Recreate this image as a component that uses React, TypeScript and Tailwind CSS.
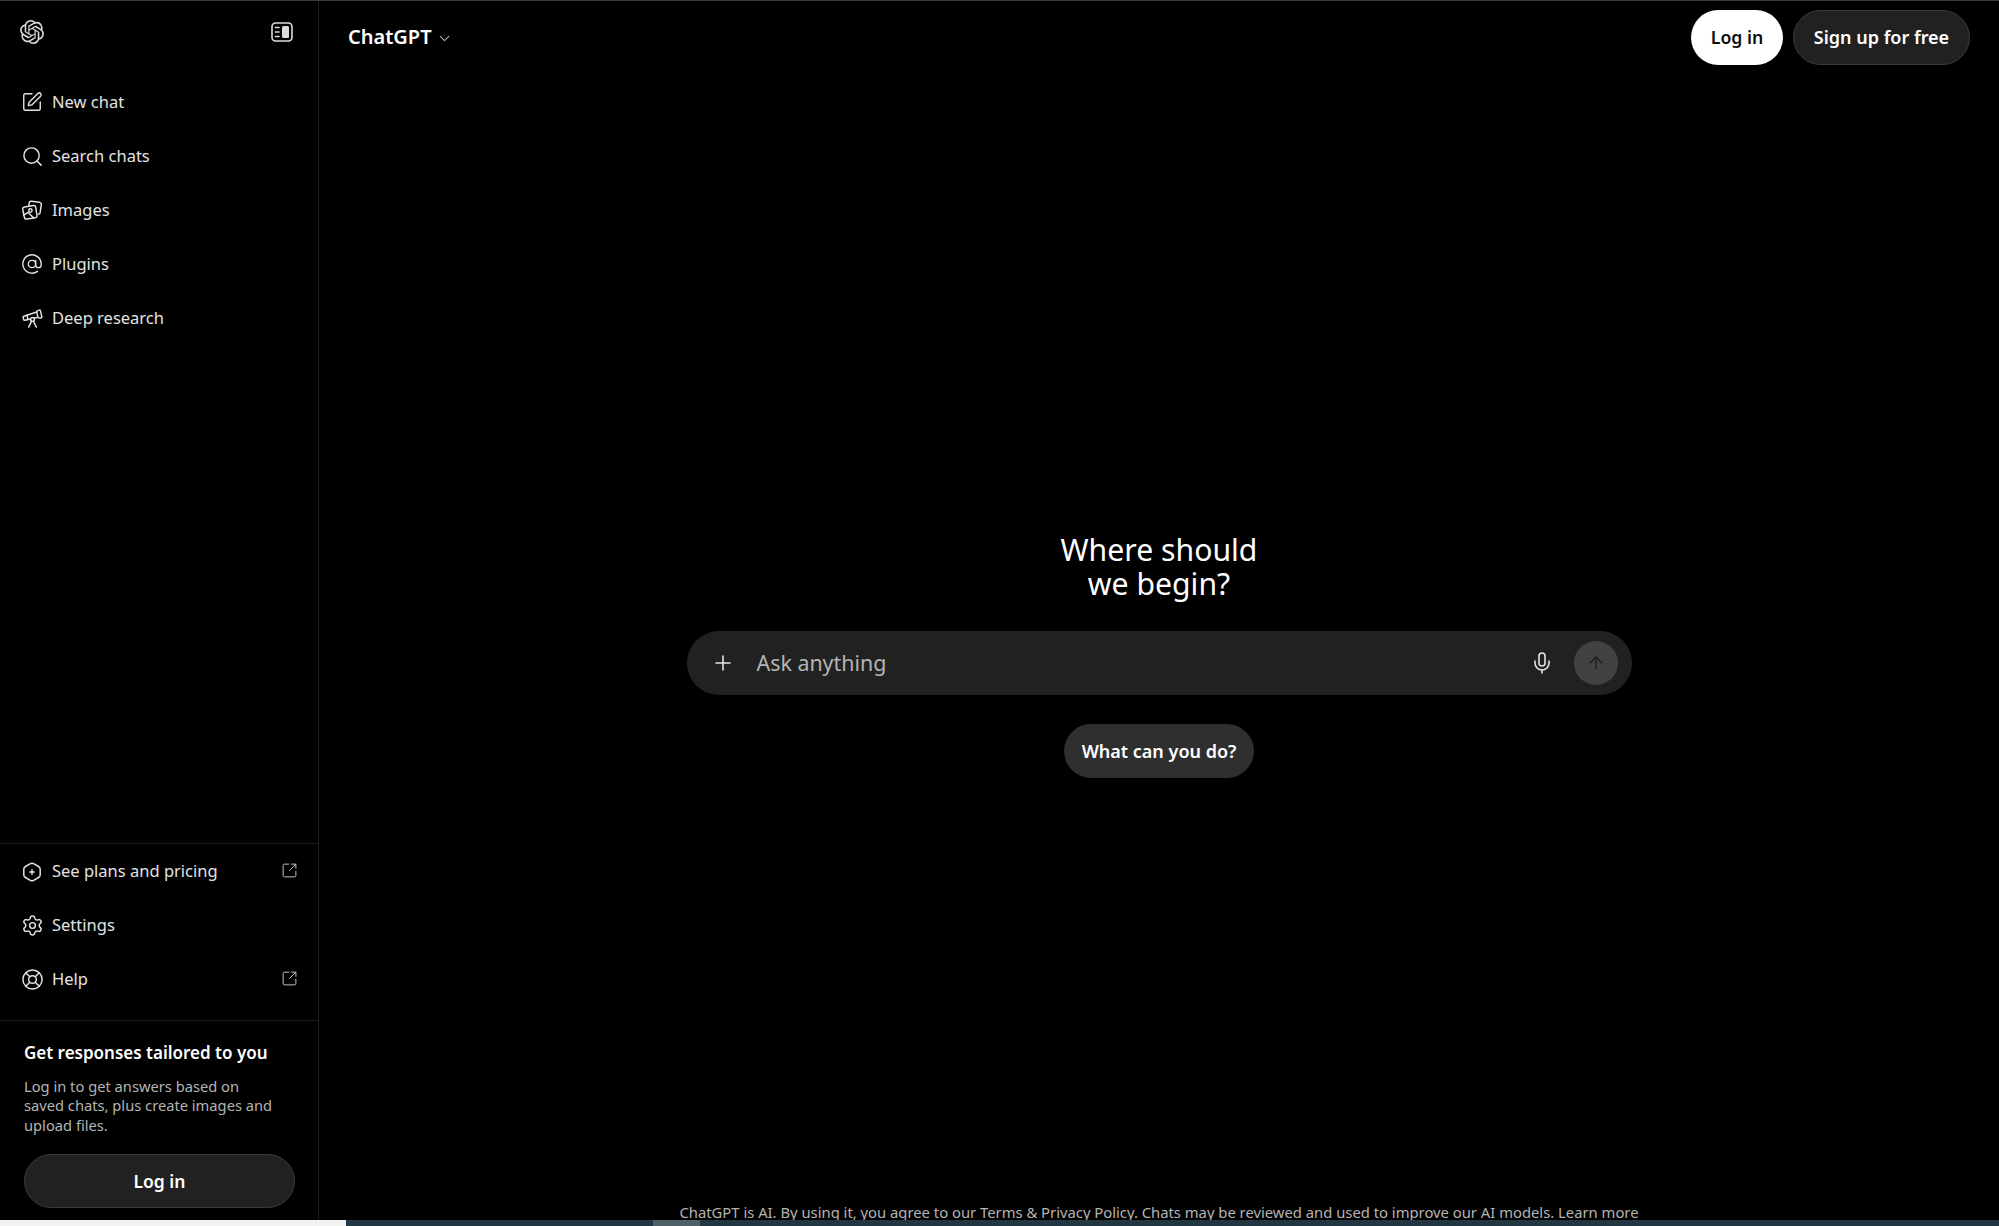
import { ArrowUp, AtSign, ChevronDown, LifeBuoy, Mic, Plus, Search, Settings, SquareArrowOutUpRight, SquarePen, Telescope } from 'lucide-react';
import { SiOpenai } from 'react-icons/si';

const font = "font-['Noto_Sans','Open_Sans',sans-serif]";

function SidebarToggleIcon() {
  return (
    <svg width="22" height="20" viewBox="0 0 22 20" fill="none" stroke="currentColor" strokeWidth="1.6">
      <rect x="1" y="1" width="20" height="18" rx="3.5" />
      <rect x="11" y="4" width="7" height="12" rx="1.5" fill="currentColor" stroke="none" />
      <path d="M4.5 5.5h3.5M4.5 10h3.5M4.5 14.5h3.5" strokeLinecap="round" />
    </svg>
  );
}

function ImagesIcon() {
  return (
    <svg width="23" height="23" viewBox="0 0 22 22" fill="none" stroke="currentColor" strokeWidth="1.4" strokeLinejoin="round" strokeLinecap="round">
      <path d="M7.5 6.2 7.9 3.6c.2-1 1-1.6 2-1.5l8 1.1c1 .2 1.7 1.1 1.5 2.1l-1.1 7.7c-.1.9-.8 1.5-1.7 1.6" />
      <path d="M3.2 7.6 12 6.3c1-.1 1.9.5 2.1 1.5l1.2 8c.1 1-.5 1.9-1.5 2.1l-8.4 1.3c-1 .1-1.9-.5-2.1-1.5L1.6 9.7c-.1-1 .6-1.9 1.6-2.1Z" />
      <circle cx="9" cy="11" r="1.6" />
      <path d="m2.4 15.5 4.4-2.6 5.4 5.2" />
    </svg>
  );
}

function HexPlusIcon() {
  return (
    <svg width="20" height="20" viewBox="0 0 20 20" fill="none" stroke="currentColor" strokeWidth="1.5" strokeLinecap="round" strokeLinejoin="round">
      <path d="M8.4 1.6a3.2 3.2 0 0 1 3.2 0l5 2.9a3.2 3.2 0 0 1 1.6 2.8v5.4a3.2 3.2 0 0 1-1.6 2.8l-5 2.9a3.2 3.2 0 0 1-3.2 0l-5-2.9a3.2 3.2 0 0 1-1.6-2.8V7.3a3.2 3.2 0 0 1 1.6-2.8Z" />
      <path d="M10 7.8v4.4M7.8 10h4.4" />
    </svg>
  );
}

const topItems = [
  { label: 'New chat', icon: <SquarePen size={22} strokeWidth={1.5} /> },
  { label: 'Search chats', icon: <Search size={23} strokeWidth={1.5} /> },
  { label: 'Images', icon: <ImagesIcon /> },
  { label: 'Plugins', icon: <AtSign size={22} strokeWidth={1.5} /> },
  { label: 'Deep research', icon: <Telescope size={23} strokeWidth={1.5} /> },
];

const bottomItems = [
  { label: 'See plans and pricing', icon: <HexPlusIcon />, external: true },
  { label: 'Settings', icon: <Settings size={23} strokeWidth={1.5} />, external: false },
  { label: 'Help', icon: <LifeBuoy size={23} strokeWidth={1.5} />, external: true },
];

function NavRow({ label, icon, external }: { label: string; icon: React.ReactNode; external?: boolean }) {
  return (
    <div className="flex h-[54px] items-center pl-[20px] pr-[20px] text-[#e3e3e3]">
      <span className="flex w-[24px] justify-center">{icon}</span>
      <span className="ml-[8px] flex-1 text-[16.5px]">{label}</span>
      {external && <SquareArrowOutUpRight size={17} strokeWidth={1.4} className="text-[#c4c4c4] mb-[2px]" />}
    </div>
  );
}

export default function App() {
  return (
    <div className={`flex h-screen w-full flex-col overflow-hidden border-t border-[#3a3a3a] bg-black text-white ${font}`}>
      <div className="flex min-h-0 flex-1">
        {/* Sidebar */}
        <aside className="flex w-[319px] shrink-0 flex-col border-r border-[#1c1c1c]">
          <div className="flex h-[64px] items-center justify-between pl-[20px] pr-[25px] pb-[3px] text-[#dcdcdc]">
            <SiOpenai size={24} />
            <SidebarToggleIcon />
          </div>
          <nav className="pt-[10px]">
            {topItems.map((item) => (
              <NavRow key={item.label} label={item.label} icon={item.icon} />
            ))}
          </nav>
          <div className="mt-auto border-t border-[#1c1c1c] py-[1px] pb-[13px]">
            {bottomItems.map((item) => (
              <NavRow key={item.label} label={item.label} icon={item.icon} external={item.external} />
            ))}
          </div>
          <div className="border-t border-[#1c1c1c] px-[24px] pt-[20px] pb-[12px]">
            <h2 className="text-[17px] font-semibold leading-[24px] text-white">Get responses tailored to you</h2>
            <p className="mt-[12px] w-[255px] text-[14.7px] leading-[19.5px] text-[#b4b4b4]">
              Log in to get answers based on saved chats, plus create images and upload files.
            </p>
            <button className="mt-[19px] h-[54px] w-[271px] rounded-full border border-[#3a3a3a] bg-[#212121] text-[17.5px] font-semibold text-white">
              Log in
            </button>
          </div>
        </aside>

        {/* Main */}
        <main className="flex min-w-0 flex-1 flex-col">
          <header className="flex items-center justify-between pl-[29px] pr-[29px] pt-[9px]">
            <div className="flex items-center gap-[4px] pb-[1px]">
              <span className="text-[20px] font-semibold">ChatGPT</span>
              <ChevronDown size={17} strokeWidth={1.5} className="mt-[3px] text-[#b4b4b4]" />
            </div>
            <div className="flex gap-[10px]">
              <button className="h-[55px] w-[92px] rounded-full bg-white text-[17.7px] font-semibold text-[#0d0d0d]">Log in</button>
              <button className="h-[55px] w-[177px] rounded-full border border-[#3a3a3a] bg-[#212121] text-[18px] font-semibold text-white">Sign up for free</button>
            </div>
          </header>

          <div className="flex flex-1 flex-col items-center pt-[468px]">
            <h1 className="text-center text-[30.2px] leading-[34px] text-white">
              Where should
              <br />
              we begin?
            </h1>
            <div className="mt-[30px] flex h-[64px] w-[945px] items-center rounded-[32px] bg-[#212121] pl-[24px] pr-[14px]">
              <Plus size={24} strokeWidth={1.6} className="text-[#e3e3e3]" />
              <span className="ml-[22px] flex-1 text-[21.4px] text-[#b4b4b4]">Ask anything</span>
              <Mic size={24} strokeWidth={1.6} className="text-[#e3e3e3]" />
              <span className="ml-[20px] flex size-[44px] items-center justify-center rounded-full bg-[#424242]">
                <ArrowUp size={20} strokeWidth={1.5} className="text-[#1a1a1a]" />
              </span>
            </div>
            <button className="mt-[29px] h-[54px] w-[190px] rounded-full bg-[#2f2f2f] text-[18px] font-semibold text-white">What can you do?</button>
          </div>

          <p className="h-[17px] overflow-hidden text-center text-[14.8px] leading-[19px] text-[#b4b4b4]">
            ChatGPT is AI. By using it, you agree to our Terms &amp; Privacy Policy. Chats may be reviewed and used to improve our AI models. Learn more
          </p>
        </main>
      </div>

      {/* Strip along the bottom edge */}
      <div className="flex h-[6px] shrink-0 bg-[#233742]">
        <div className="w-[346px] bg-[#f2f2f2]" />
        <div className="ml-[307px] w-[47px] bg-[#4f6069]" />
      </div>
    </div>
  );
}
